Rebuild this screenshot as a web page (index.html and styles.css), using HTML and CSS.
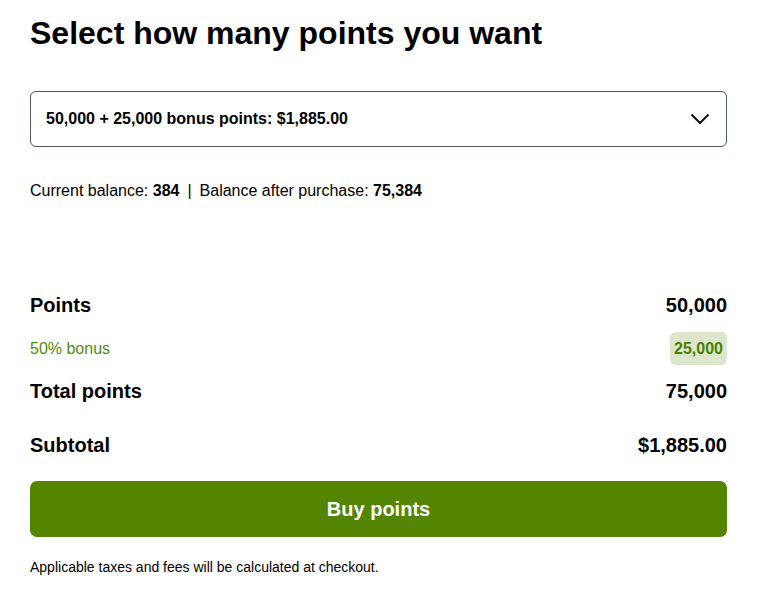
FILE: index.html
```html
<!DOCTYPE html>
<html>
<head>
<meta charset="utf-8">
<link rel="stylesheet" href="styles.css">
</head>
<body>
<main class="page">
  <h1 class="title">Select how many points you want</h1>
  <div class="select">
    <span class="select-text">50,000 + 25,000 bonus points: $1,885.00</span>
    <svg class="chevron" width="20" height="12" viewBox="0 0 20 12"><path d="M1.5 1.5 L10 10 L18.5 1.5" fill="none" stroke="#111" stroke-width="2"/></svg>
  </div>
  <p class="balance">Current balance: <b>384</b><span class="sep">|</span>Balance after purchase: <b>75,384</b></p>
  <div class="summary">
    <div class="row row-main"><span>Points</span><span>50,000</span></div>
    <div class="row row-bonus"><span>50% bonus</span><span class="badge">25,000</span></div>
    <div class="row row-main"><span>Total points</span><span>75,000</span></div>
    <div class="row row-main row-sub"><span>Subtotal</span><span>$1,885.00</span></div>
  </div>
  <button class="buy">Buy points</button>
  <p class="note">Applicable taxes and fees will be calculated at checkout.</p>
</main>
</body>
</html>
```
FILE: styles.css
```css
* { box-sizing: border-box; }
body {
  margin: 0;
  font-family: "Liberation Sans", Arial, sans-serif;
  color: #000;
  background: #fff;
}
.page {
  padding: 14px 32px 0 30px;
  display: flex;
  flex-direction: column;
}
.title {
  margin: 0;
  font-size: 32px;
  font-weight: 700;
  line-height: 38px;
}
.select {
  margin-top: 39px;
  height: 56px;
  border: 1px solid #4c5568;
  border-radius: 6px;
  display: flex;
  align-items: center;
  justify-content: space-between;
  padding: 0 16px 0 15px;
}
.select-text {
  font-size: 16px;
  font-weight: 700;
}
.chevron { display: block; }
.balance {
  margin: 34px 0 0;
  font-size: 16px;
  line-height: 20px;
}
.sep { margin: 0 8px; font-weight: 300; }
.summary {
  margin-top: 91px;
  display: flex;
  flex-direction: column;
}
.row {
  display: flex;
  justify-content: space-between;
  align-items: center;
}
.row-main {
  font-size: 20px;
  font-weight: 700;
  height: 26px;
}
.row-bonus {
  margin: 14px 0 13px;
  font-size: 16px;
  color: #4f8a10;
  height: 33px;
}
.badge {
  background: #dde6cc;
  color: #4a7f00;
  font-weight: 700;
  font-size: 16px;
  border-radius: 6px;
  padding: 0 4px;
  height: 33px;
  display: flex;
  align-items: center;
}
.row-sub { margin-top: 28px; }
.buy {
  margin-top: 23px;
  height: 56px;
  border: none;
  border-radius: 7px;
  background: #548500;
  color: #fff;
  font-family: inherit;
  font-size: 20px;
  font-weight: 700;
}
.note {
  margin: 22px 0 0;
  font-size: 14px;
  line-height: 16px;
}
```
